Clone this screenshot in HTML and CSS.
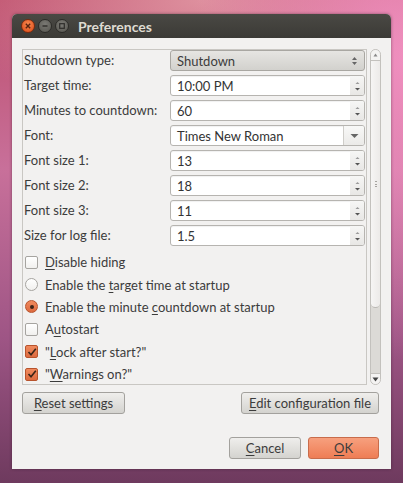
FILE: index.html
```html
<!DOCTYPE html>
<html>
<head>
  <meta charset="utf-8">
  <title>Preferences</title>
  <link rel="stylesheet" href="styles.css">
</head>
<body>
  <div class="window">
    <div class="titlebar">
      <div class="wbtns">
        <span class="wbtn close">
          <svg width="6" height="6" viewBox="0 0 6 6"><path d="M0.8 0.8 L5.2 5.2 M5.2 0.8 L0.8 5.2" stroke="#5a2410" stroke-width="1.4"/></svg>
        </span>
        <span class="wbtn">
          <svg width="6" height="6" viewBox="0 0 6 6"><path d="M0.5 3 H5.5" stroke="#2e2d2a" stroke-width="1.4"/></svg>
        </span>
        <span class="wbtn">
          <svg width="6" height="6" viewBox="0 0 6 6"><rect x="0.7" y="0.7" width="4.6" height="4.6" fill="none" stroke="#2e2d2a" stroke-width="1.2"/></svg>
        </span>
      </div>
      <h1>Preferences</h1>
    </div>
    <div class="content">
      <div class="scroll-area">
        <div class="panel">
          <div class="form">
            <label>Shutdown type:</label>
            <div class="combo">Shutdown
              <svg class="arr" width="7" height="10" viewBox="0 0 7 10"><path d="M3.5 1 L6 4 H1 Z M1 6 H6 L3.5 9 Z" fill="#666"/></svg>
            </div>

            <label>Target time:</label>
            <div class="spin"><span class="val">10:00 PM</span><span class="btns"><svg width="7" height="12" viewBox="0 0 7 12"><path d="M3.5 2 L5.5 4 H1.5 Z" fill="#9a9a9a"/><path d="M1 8 H6 L3.5 10.5 Z" fill="#555"/></svg></span></div>

            <label>Minutes to countdown:</label>
            <div class="spin"><span class="val">60</span><span class="btns"><svg width="7" height="12" viewBox="0 0 7 12"><path d="M3.5 2 L5.5 4 H1.5 Z" fill="#9a9a9a"/><path d="M1 8 H6 L3.5 10.5 Z" fill="#555"/></svg></span></div>

            <label>Font:</label>
            <div class="entrycombo"><span class="val">Times New Roman</span><span class="drop"><svg width="9" height="6" viewBox="0 0 9 6"><path d="M0.5 1 H8.5 L4.5 5 Z" fill="#666"/></svg></span></div>

            <label>Font size 1:</label>
            <div class="spin"><span class="val">13</span><span class="btns"><svg width="7" height="12" viewBox="0 0 7 12"><path d="M3.5 2 L5.5 4 H1.5 Z" fill="#9a9a9a"/><path d="M1 8 H6 L3.5 10.5 Z" fill="#555"/></svg></span></div>

            <label>Font size 2:</label>
            <div class="spin"><span class="val">18</span><span class="btns"><svg width="7" height="12" viewBox="0 0 7 12"><path d="M3.5 2 L5.5 4 H1.5 Z" fill="#9a9a9a"/><path d="M1 8 H6 L3.5 10.5 Z" fill="#555"/></svg></span></div>

            <label>Font size 3:</label>
            <div class="spin"><span class="val">11</span><span class="btns"><svg width="7" height="12" viewBox="0 0 7 12"><path d="M3.5 2 L5.5 4 H1.5 Z" fill="#9a9a9a"/><path d="M1 8 H6 L3.5 10.5 Z" fill="#555"/></svg></span></div>

            <label>Size for log file:</label>
            <div class="spin"><span class="val">1.5</span><span class="btns"><svg width="7" height="12" viewBox="0 0 7 12"><path d="M3.5 2 L5.5 4 H1.5 Z" fill="#9a9a9a"/><path d="M1 8 H6 L3.5 10.5 Z" fill="#555"/></svg></span></div>
          </div>

          <div class="checks">
            <div class="check"><span class="box"></span><span><u>D</u>isable hiding</span></div>
            <div class="check"><span class="radio"></span><span>Enable the <u>t</u>arget time at startup</span></div>
            <div class="check"><span class="radio on"></span><span>Enable the minute <u>c</u>ountdown at startup</span></div>
            <div class="check"><span class="box"></span><span>A<u>u</u>tostart</span></div>
            <div class="check"><span class="box on"><svg width="10" height="10" viewBox="0 0 10 10"><path d="M1.5 5 L4 7.8 L8.8 1.8" fill="none" stroke="#3a2418" stroke-width="1.6"/></svg></span><span>"<u>L</u>ock after start?"</span></div>
            <div class="check"><span class="box on"><svg width="10" height="10" viewBox="0 0 10 10"><path d="M1.5 5 L4 7.8 L8.8 1.8" fill="none" stroke="#3a2418" stroke-width="1.6"/></svg></span><span>"<u>W</u>arnings on?"</span></div>
          </div>
        </div>

        <div class="scrollbar">
          <div class="sb-up"><svg width="5" height="4" viewBox="0 0 5 4"><path d="M2.5 0.5 L4.5 3.5 H0.5 Z" fill="#888"/></svg></div>
          <div class="thumb"><span class="grip"></span></div>
          <div class="sb-down"><svg width="7" height="5" viewBox="0 0 7 5"><path d="M0.5 0.5 H6.5 L3.5 4.5 Z" fill="#444"/></svg></div>
        </div>
      </div>

      <div class="row-actions">
        <button class="btn reset"><u>R</u>eset settings</button>
        <button class="btn edit"><u>E</u>dit configuration file</button>
      </div>

      <div class="row-dialog">
        <button class="btn cancel"><u>C</u>ancel</button>
        <button class="btn ok"><u>O</u>K</button>
      </div>
    </div>
  </div>
</body>
</html>
```

FILE: styles.css
```css
html, body {
  margin: 0;
  padding: 0;
  width: 403px;
  height: 483px;
  overflow: hidden;
}
body {
  font-family: "Lato", "DejaVu Sans", sans-serif;
  font-size: 13px;
  color: #3c3c3c;
  padding: 14px 0 0 12px;
  box-sizing: border-box;
  background:
    radial-gradient(ellipse 220px 300px at 410px 60px, rgba(245, 150, 200, 0.9), rgba(245, 150, 200, 0) 100%),
    radial-gradient(ellipse 260px 120px at 200px 0px, rgba(230, 160, 170, 0.8), rgba(230, 160, 170, 0) 100%),
    linear-gradient(180deg, #bd4e6c 0%, #c8709a 35%, #9e5585 70%, #6e3a5e 100%);
}
u {
  text-decoration: underline;
  text-underline-offset: 2px;
}

.window {
  width: 379px;
  height: 455px;
  background: #f2f1f0;
  border-radius: 5px 5px 0 0;
  box-shadow: 0 0 3px rgba(40, 20, 30, 0.5);
  display: flex;
  flex-direction: column;
}
.titlebar {
  height: 24px;
  flex: none;
  display: flex;
  align-items: center;
  background: linear-gradient(#4a4944, #3b3a36);
  border-radius: 5px 5px 0 0;
  padding-left: 9px;
}
.wbtns {
  display: flex;
  gap: 3px;
}
.wbtn {
  width: 12px;
  height: 12px;
  border-radius: 50%;
  background: radial-gradient(circle at 50% 35%, #7a7974, #56554f);
  border: 0.5px solid #2c2b28;
  display: flex;
  align-items: center;
  justify-content: center;
}
.wbtn.close {
  background: radial-gradient(circle at 50% 35%, #f7874e, #dd4a17);
  border-color: #7a2a0e;
}
.titlebar h1 {
  margin: 0 0 0 9px;
  font-size: 14px;
  font-weight: bold;
  color: #dfdbd2;
}

.content {
  flex: 1;
  padding: 11px 10px 10px 10px;
  display: flex;
  flex-direction: column;
}
.scroll-area {
  display: flex;
  gap: 3px;
  height: 336px;
}
.panel {
  width: 345px;
  box-sizing: border-box;
  border: 1px solid #c9c7c3;
  padding: 0 2px 0 1px;
}

.form {
  display: grid;
  grid-template-columns: 146px 195px;
  grid-auto-rows: 21px;
  row-gap: 4px;
  align-items: center;
}
.form label {
  line-height: 21px;
}
.combo, .spin, .entrycombo {
  height: 21px;
  box-sizing: border-box;
  border-radius: 3px;
  display: flex;
  align-items: center;
}
.combo {
  border: 1px solid #a9a7a2;
  background: linear-gradient(#e6e5e2, #d2d1cd);
  padding: 0 6px 0 6px;
  justify-content: space-between;
}
.spin, .entrycombo {
  border: 1px solid #b6b4b0;
  background: #fff;
  box-shadow: inset 0 1px 1px rgba(0, 0, 0, 0.06);
}
.val {
  flex: 1;
  padding-left: 6px;
  color: #333;
}
.spin .btns {
  width: 14px;
  height: 100%;
  display: flex;
  align-items: center;
  justify-content: center;
  background: linear-gradient(#f6f6f5, #e8e7e5);
  border-radius: 0 2px 2px 0;
}
.entrycombo .drop {
  width: 20px;
  height: 100%;
  border-left: 1px solid #cfcdc9;
  display: flex;
  align-items: center;
  justify-content: center;
  background: linear-gradient(#f8f8f7, #ebeae8);
  border-radius: 0 2px 2px 0;
}

.checks {
  margin-top: 5px;
  padding-left: 1px;
}
.check {
  height: 22.4px;
  display: flex;
  align-items: center;
  gap: 7px;
}
.box, .radio {
  width: 11px;
  height: 11px;
  flex: none;
  border: 1px solid #a6a4a0;
  background: linear-gradient(#fff, #f1f0ee);
  display: flex;
  align-items: center;
  justify-content: center;
}
.box {
  border-radius: 2px;
}
.radio {
  border-radius: 50%;
}
.box.on, .radio.on {
  background: linear-gradient(#f08a5e, #dd6a3f);
  border-color: #b8532c;
}
.radio.on::after {
  content: "";
  width: 4px;
  height: 4px;
  border-radius: 50%;
  background: #3d2418;
}

.scrollbar {
  width: 11px;
  box-sizing: border-box;
  border: 1px solid #c3c1bd;
  border-radius: 6px;
  background: #dcdad6;
  display: flex;
  flex-direction: column;
  overflow: hidden;
}
.sb-up {
  height: 10px;
  flex: none;
  background: #f4f3f2;
  display: flex;
  align-items: center;
  justify-content: center;
  border-bottom: 1px solid #c3c1bd;
}
.thumb {
  height: 246px;
  flex: none;
  background: linear-gradient(90deg, #f6f5f4, #eceae8);
  border-bottom: 1px solid #b9b7b3;
  border-radius: 0 0 5px 5px;
  display: flex;
  align-items: center;
  justify-content: center;
}
.grip {
  width: 2px;
  height: 7px;
  background: repeating-linear-gradient(#a5a39f 0 1px, transparent 1px 2.5px);
}
.sb-down {
  margin-top: auto;
  height: 10px;
  display: flex;
  align-items: center;
  justify-content: center;
  background: #f4f3f2;
  border-top: 1px solid #c3c1bd;
}

.row-actions {
  margin-top: 7px;
  display: flex;
  justify-content: space-between;
  padding-right: 2px;
}
.row-dialog {
  margin-top: auto;
  display: flex;
  justify-content: flex-end;
  gap: 7px;
  padding-right: 2px;
}
.btn {
  font-family: inherit;
  font-size: 13px;
  color: #3c3c3c;
  height: 22px;
  border: 1px solid #a3a19d;
  border-radius: 3px;
  background: linear-gradient(#efeeec, #d4d3cf);
  padding: 0;
  margin: 0;
}
.reset { width: 103px; }
.edit { width: 138px; }
.cancel { width: 72px; }
.ok {
  width: 71px;
  background: linear-gradient(#f7a07e, #ee7d55);
  border-color: #c86c4b;
}
```
